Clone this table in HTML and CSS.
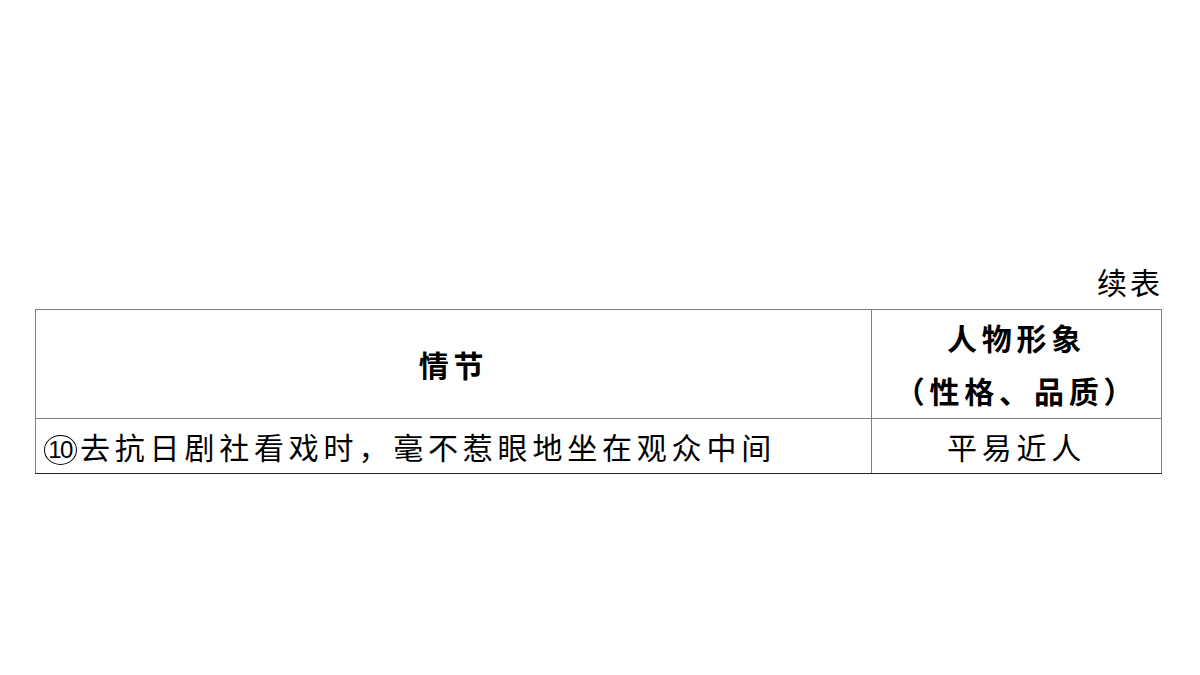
FILE: index.html
```html
<!DOCTYPE html>
<html lang="zh">
<head>
<meta charset="utf-8">
<link rel="stylesheet" href="styles.css">
</head>
<body>
<div class="page">
  <div class="caption">续表</div>
  <table class="tbl">
    <tr class="head">
      <td class="c1">情节</td>
      <td class="c2"><div>人物形象</div><div>（性格、品质）</div></td>
    </tr>
    <tr class="row">
      <td class="c1 left"><span class="num">10</span>去抗日剧社看戏时，毫不惹眼地坐在观众中间</td>
      <td class="c2">平易近人</td>
    </tr>
  </table>
</div>
</body>
</html>
```

FILE: styles.css
```css
html, body {
  margin: 0;
  padding: 0;
  background: #fff;
}
.page {
  width: 1200px;
  height: 675px;
  box-sizing: border-box;
  padding: 264px 39px 0 35px;
  font-family: "Noto Sans CJK SC", sans-serif;
  color: #000;
}
.caption {
  text-align: right;
  font-size: 30px;
  line-height: 34px;
  letter-spacing: 3px;
  margin-right: -2px;
  margin-bottom: 11px;
}
.tbl {
  border-collapse: collapse;
  width: 1127px;
  table-layout: fixed;
}
.tbl td {
  border: 1px solid #808080;
  padding: 0;
  text-align: center;
  vertical-align: middle;
  font-size: 30px;
  letter-spacing: 4.8px;
}
.tbl .c1 {
  width: 835px;
}
.head td {
  height: 108px;
  font-weight: 700;
  line-height: 53px;
}
.row td {
  height: 54px;
  line-height: 52px;
  border-bottom-color: #222;
}
.tbl td.left {
  text-align: left;
  padding-left: 8px;
}
.num {
  display: inline-block;
  box-sizing: border-box;
  width: 33px;
  height: 30px;
  border: 1.5px solid #000;
  border-radius: 50%;
  font-family: "Liberation Sans", sans-serif;
  font-size: 24px;
  line-height: 27px;
  letter-spacing: -1.5px;
  text-align: center;
  text-indent: -1px;
  vertical-align: 1px;
  margin-right: 3px;
}
```
